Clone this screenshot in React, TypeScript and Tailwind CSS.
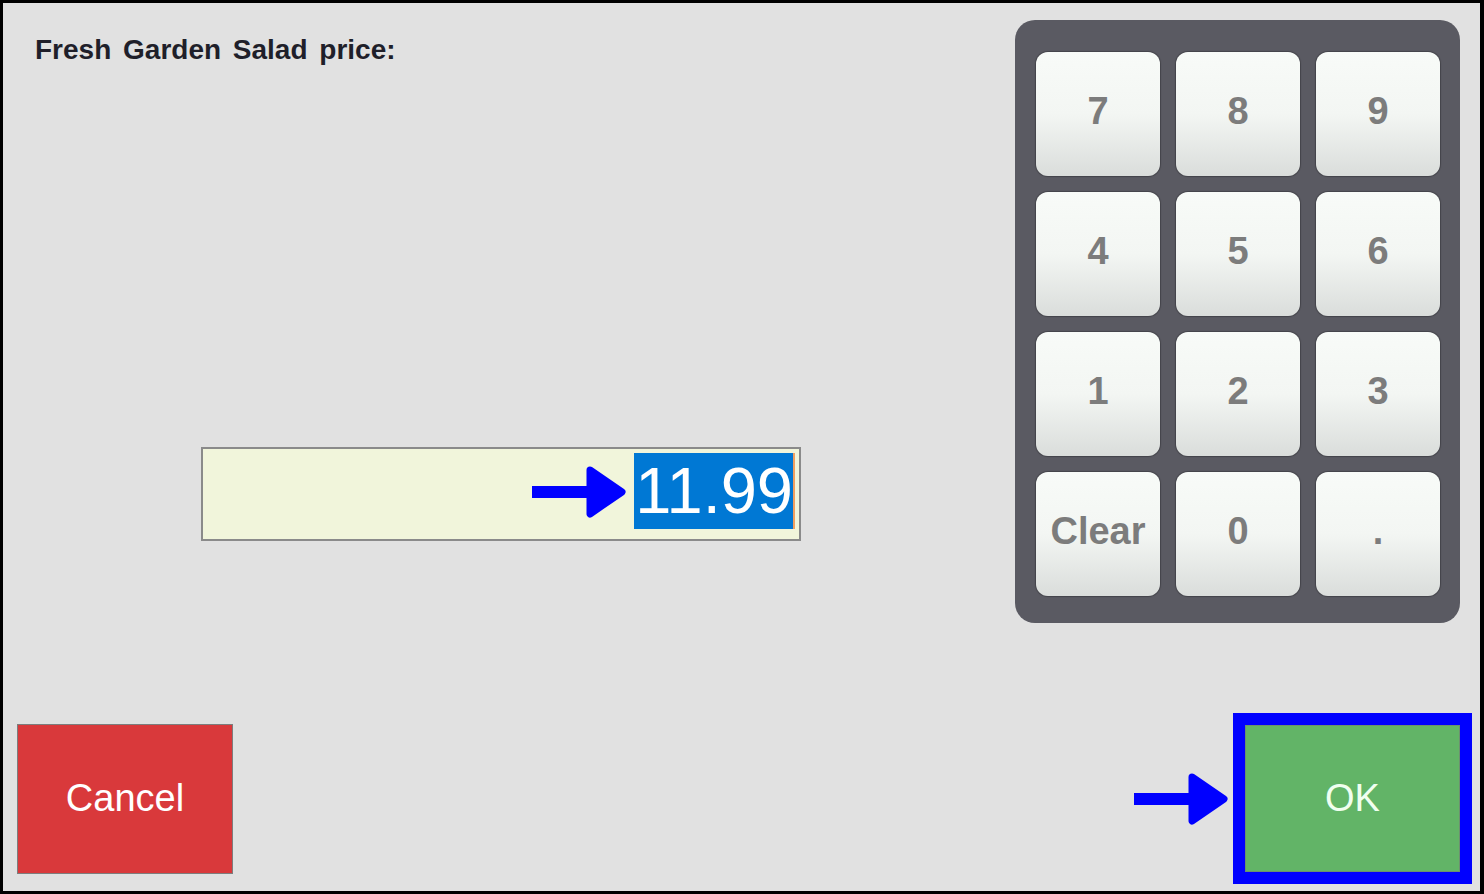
import React from "react"

const keys = ["7", "8", "9", "4", "5", "6", "1", "2", "3", "Clear", "0", "."]

function Arrow({ className }: { className?: string }) {
  return (
    <svg width="94" height="52" viewBox="0 0 94 52" className={className}>
      <rect x="0" y="20" width="60" height="12" fill="#0000ff" />
      <polygon
        points="58,4 90,26 58,48"
        fill="#0000ff"
        stroke="#0000ff"
        strokeWidth="7"
        strokeLinejoin="round"
      />
    </svg>
  )
}

export default function App() {
  return (
    <div className="w-[1484px] h-[894px] bg-[#e1e1e1] border-solid border-black border-t-[3px] border-l-[3px] border-r-[4px] border-b-[3px] flex flex-col font-['Liberation_Sans',Arial,sans-serif]">
      {/* top area */}
      <div className="flex flex-1">
        <div className="flex-1 flex flex-col">
          <h1 className="pl-[32px] pt-[31px] text-[28px] leading-[32px] font-bold text-[#1f1f2a] [word-spacing:4px]">
            Fresh Garden Salad price:
          </h1>
          <div className="mt-[381px] ml-[198px]">
            <div className="relative w-[600px] h-[94px] border-2 border-[#8a8a8a] bg-[#f1f5db] flex justify-end pr-[4px] pt-[4px]">
              <div className="flex h-[76px]">
                <span className="bg-[#0078d4] text-white text-[65px] leading-[76px] pl-[1px]">11.99</span>
                <span className="w-[2px] h-full bg-[#f0a060]" />
              </div>
              <Arrow className="absolute left-[329px] top-[17px]" />
            </div>
          </div>
        </div>

        {/* keypad */}
        <div className="mt-[17px] mr-[20px] w-[445px] h-[603px] bg-[#5a5a62] rounded-[20px] pt-[32px] pl-[21px]">
          <div className="grid grid-cols-[124px_124px_124px] auto-rows-[124px] gap-[16px]">
            {keys.map((k) => (
              <button
                key={k}
                className="rounded-[12px] bg-[linear-gradient(to_bottom,#f8fbf8_0%,#f3f6f3_50%,#dadddb_100%)] shadow-[0_0_1px_1px_rgba(0,0,0,0.25)] flex items-center justify-center text-[38px] font-bold text-[#7c7c7c] pb-[6px]"
              >
                {k}
              </button>
            ))}
          </div>
        </div>
      </div>

      {/* bottom row */}
      <div className="h-[171px] mb-[7px] flex items-center justify-between">
        <button className="ml-[14px] w-[216px] h-[150px] bg-[#d9393b] border border-[#7d7d7d] text-white text-[38px] flex items-center justify-center">
          Cancel
        </button>
        <div className="flex items-center mr-[8px]">
          <Arrow className="mr-[5px]" />
          <div className="border-[12px] border-[#0000ff]">
            <button className="w-[215px] h-[147px] bg-[#62b467] border border-[#6c8f6f] text-[#f0fff0] text-[38px] flex items-center justify-center">
              OK
            </button>
          </div>
        </div>
      </div>
    </div>
  )
}
